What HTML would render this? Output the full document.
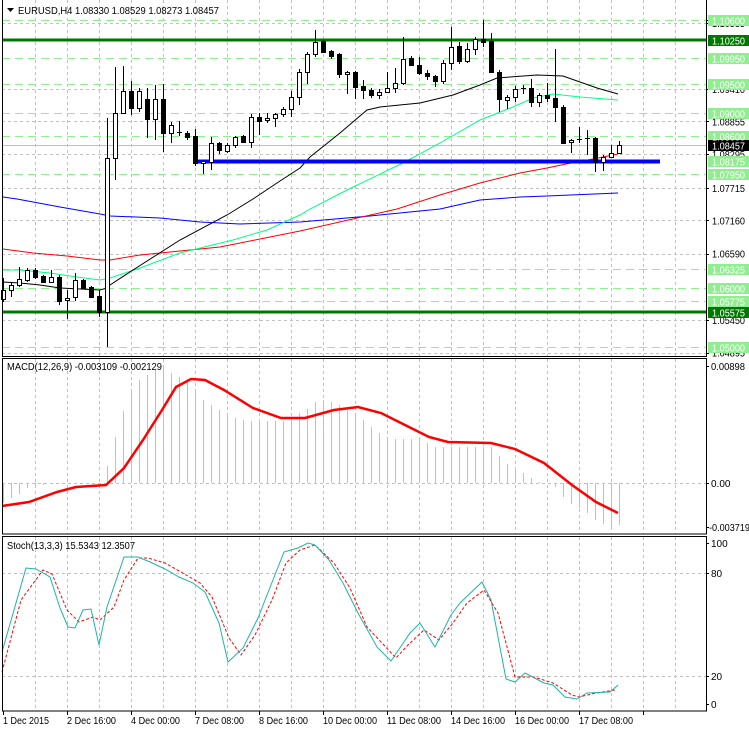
<!DOCTYPE html>
<html><head><meta charset="utf-8"><style>
html,body{margin:0;padding:0;background:#fff;}
svg{display:block;font-family:"Liberation Sans",sans-serif;}
</style></head><body>
<svg width="749" height="732" viewBox="0 0 749 732" xmlns="http://www.w3.org/2000/svg">
<rect width="749" height="732" fill="#fff"/>
<!-- vertical grid -->
<g stroke="#c0c0c0" stroke-width="1" stroke-dasharray="3,3">
<path d="M35.5 0V356M67.5 0V356M99.5 0V356M131.5 0V356M163.5 0V356M195.5 0V356M227.5 0V356M259.5 0V356M291.5 0V356M323.5 0V356M355.5 0V356M387.5 0V356M419.5 0V356M451.5 0V356M483.5 0V356M515.5 0V356M547.5 0V356M579.5 0V356M611.5 0V356M643.5 0V356M675.5 0V356"/>
<path d="M35.5 359V534M67.5 359V534M99.5 359V534M131.5 359V534M163.5 359V534M195.5 359V534M227.5 359V534M259.5 359V534M291.5 359V534M323.5 359V534M355.5 359V534M387.5 359V534M419.5 359V534M451.5 359V534M483.5 359V534M515.5 359V534M547.5 359V534M579.5 359V534M611.5 359V534M643.5 359V534M675.5 359V534"/>
<path d="M35.5 537V711M67.5 537V711M99.5 537V711M131.5 537V711M163.5 537V711M195.5 537V711M227.5 537V711M259.5 537V711M291.5 537V711M323.5 537V711M355.5 537V711M387.5 537V711M419.5 537V711M451.5 537V711M483.5 537V711M515.5 537V711M547.5 537V711M579.5 537V711M611.5 537V711M643.5 537V711M675.5 537V711"/>
<!-- horizontal grid main -->
<path d="M2 23.5H706M2 89.5H706M2 121.5H706M2 154.5H706M2 188.5H706M2 220.5H706M2 254.5H706M2 320.5H706M2 353.5H706"/>
<path d="M2 483.5H706M2 573.5H706M2 676.5H706"/>
</g>
<!-- light green levels -->
<g stroke="#90ee90" stroke-width="1" stroke-dasharray="8,5">
<path d="M2 20.5H706M2 58.5H706M2 84.5H706M2 113.5H706M2 136.5H706M2 174.5H706M2 269.5H706M2 288.5H706M2 301.5H706M2 347.5H706"/>
</g>
<!-- bid line -->
<path d="M2 145.5H706" stroke="#c0c0c0" stroke-width="1"/>
<!-- dark green levels -->
<path d="M2 40H706M2 312H706" stroke="#007800" stroke-width="3"/>
<!-- MAs -->
<g fill="none" stroke-width="1">
<polyline stroke="#0000ff" points="3,197 17,199 60,207 100,214 110,216 160,218 200,222 240,224 300,222 370,216 440,209 480,200 520,197 547,196 618,193"/>
<polyline stroke="#ff0000" points="3,249 33,253 67,256 100,260 110,260 140,255 180,251 220,247 260,239 300,231 397,209 440,195 480,183 520,173 547,168 571,163 593,159 618,154"/>
<polyline stroke="#00ff7f" points="3,270 20,270 50,273 77,277 100,280 110,278 140,268 180,253 233,240 267,230 300,215 310,209 347,190 403,163 440,143 480,120 513,107 533,98 553,94 580,97 618,100"/>
<polyline stroke="#000" points="3,282 20,283 40,285 60,288 80,289 100,290 107,288 110,285 133,270 180,240 227,215 253,199 280,181 300,168 310,157 340,133 367,110 380,107 420,103 453,95 480,85 497,78 537,75 563,76 580,82 597,88 618,94"/>
</g>
<!-- blue level -->
<path d="M195 161.5H660" stroke="#0000ff" stroke-width="4"/>
<!-- candles -->
<g stroke="#000" stroke-width="1">
<path d="M3.5 278V302M11.5 283V297M19.5 267V287M27.5 268V282M35.5 268V279M43.5 275V283M51.5 270V283M59.5 275V305M67.5 290V319M75.5 273V301M83.5 279V289M91.5 286V298M99.5 290V317M107.5 118V347M115.5 67V180M123.5 66V113M131.5 81V115M139.5 88V112M147.5 88V138M155.5 85V140M163.5 84V152M171.5 122V143M179.5 121V136M187.5 131V140M195.5 129V166M203.5 160V174M211.5 137V170M219.5 142V154M227.5 143V153M235.5 136V148M243.5 135V143M251.5 114V148M259.5 113V135M267.5 113V123M275.5 113V127M283.5 107V117M291.5 91V117M299.5 69V105M307.5 52V84M315.5 30V57M323.5 40V53M331.5 50V59M339.5 53V78M347.5 71V94M355.5 71V99M363.5 80V99M371.5 88V98M379.5 89V99M387.5 72V93M395.5 68V93M403.5 37V85M411.5 56V66M419.5 57V75M427.5 70V80M435.5 75V87M443.5 60V84M451.5 27V70M459.5 42V64M467.5 43V63M475.5 37V55M483.5 20V47M491.5 33V73M499.5 70V112M507.5 95V109M515.5 86V102M523.5 85V94M531.5 79V107M539.5 93V107M547.5 83V102M555.5 49V122M563.5 105V143M571.5 139V153M579.5 127V143M587.5 130V155M595.5 137V172M603.5 155V171M611.5 145V158M619.5 141V154"/>
</g>
<g stroke="#000" stroke-width="1">
<!-- bull W -->
<g fill="#fff">
<rect x="1.5" y="290.5" width="4" height="9"/><rect x="9.5" y="285.5" width="4" height="5"/><rect x="17.5" y="279.5" width="4" height="6"/><rect x="25.5" y="270.5" width="4" height="10"/><rect x="49.5" y="277.5" width="4" height="5"/><rect x="65.5" y="298.5" width="4" height="2"/><rect x="73.5" y="280.5" width="4" height="17"/><rect x="105.5" y="158.5" width="4" height="154"/><rect x="113.5" y="113.5" width="4" height="45"/><rect x="121.5" y="91.5" width="4" height="22"/><rect x="137.5" y="91.5" width="4" height="17"/><rect x="153.5" y="99.5" width="4" height="20"/><rect x="169.5" y="125.5" width="4" height="8"/><rect x="201.5" y="161.5" width="4" height="2"/><rect x="209.5" y="143.5" width="4" height="19"/><rect x="225.5" y="145.5" width="4" height="6"/><rect x="233.5" y="137.5" width="4" height="8"/><rect x="249.5" y="117.5" width="4" height="25"/><rect x="265.5" y="118.5" width="4" height="2"/><rect x="273.5" y="114.5" width="4" height="4"/><rect x="281.5" y="109.5" width="4" height="5"/><rect x="289.5" y="97.5" width="4" height="12"/><rect x="297.5" y="72.5" width="4" height="25"/><rect x="305.5" y="54.5" width="4" height="18"/><rect x="313.5" y="42.5" width="4" height="12"/><rect x="345.5" y="72.5" width="4" height="2"/><rect x="377.5" y="92.5" width="4" height="3"/><rect x="385.5" y="88.5" width="4" height="4"/><rect x="393.5" y="83.5" width="4" height="5"/><rect x="401.5" y="59.5" width="4" height="24"/><rect x="441.5" y="63.5" width="4" height="18"/><rect x="449.5" y="47.5" width="4" height="16"/><rect x="465.5" y="49.5" width="4" height="12"/><rect x="473.5" y="39.5" width="4" height="10"/><rect x="505.5" y="97.5" width="4" height="3"/><rect x="513.5" y="89.5" width="4" height="8"/><rect x="537.5" y="95.5" width="4" height="7"/><rect x="569.5" y="140.5" width="4" height="2"/><rect x="601.5" y="157.5" width="4" height="5"/><rect x="609.5" y="153.5" width="4" height="4"/><rect x="617.5" y="145.5" width="4" height="8"/>
</g>
<g fill="#000">
<rect x="33.5" y="270.5" width="4" height="7"/><rect x="41.5" y="276.5" width="4" height="6"/><rect x="57.5" y="277.5" width="4" height="24"/><rect x="81.5" y="280.5" width="4" height="8"/><rect x="89.5" y="287.5" width="4" height="10"/><rect x="97.5" y="296.5" width="4" height="16"/><rect x="129.5" y="91.5" width="4" height="17"/><rect x="145.5" y="99.5" width="4" height="20"/><rect x="161.5" y="99.5" width="4" height="34"/><rect x="185.5" y="133.5" width="4" height="4"/><rect x="193.5" y="136.5" width="4" height="27"/><rect x="217.5" y="143.5" width="4" height="7"/><rect x="241.5" y="136.5" width="4" height="6"/><rect x="257.5" y="117.5" width="4" height="4"/><rect x="321.5" y="41.5" width="4" height="11"/><rect x="329.5" y="51.5" width="4" height="5"/><rect x="337.5" y="54.5" width="4" height="20"/><rect x="353.5" y="72.5" width="4" height="15"/><rect x="361.5" y="86.5" width="4" height="4"/><rect x="369.5" y="90.5" width="4" height="5"/><rect x="409.5" y="58.5" width="4" height="7"/><rect x="417.5" y="65.5" width="4" height="8"/><rect x="425.5" y="73.5" width="4" height="3"/><rect x="433.5" y="76.5" width="4" height="5"/><rect x="457.5" y="46.5" width="4" height="15"/><rect x="481.5" y="39.5" width="4" height="3"/><rect x="489.5" y="41.5" width="4" height="31"/><rect x="497.5" y="72.5" width="4" height="27"/><rect x="529.5" y="88.5" width="4" height="14"/><rect x="545.5" y="95.5" width="4" height="3"/><rect x="553.5" y="98.5" width="4" height="9"/><rect x="561.5" y="107.5" width="4" height="36"/><rect x="593.5" y="138.5" width="4" height="24"/>
</g>
<path d="M177 132.5H182M521 88.5H526M577 139.5H582M585 138.5H590"/>
</g>
<!-- MACD histogram -->
<path stroke="#c0c0c0" stroke-width="1" fill="none" d="M3.5 483V503M11.5 483V498M19.5 483V494M27.5 483V488M35.5 483V486M43.5 483V485M107.5 483V466M115.5 483V437M123.5 483V411M131.5 483V392M139.5 483V380M147.5 483V375M155.5 483V370M163.5 483V368M171.5 483V373M179.5 483V377M187.5 483V382M195.5 483V390M203.5 483V400M211.5 483V405M219.5 483V410M227.5 483V415M235.5 483V418M243.5 483V420M251.5 483V421M259.5 483V421M267.5 483V421M275.5 483V421M283.5 483V421M291.5 483V417M299.5 483V413M307.5 483V409M315.5 483V402M323.5 483V400M331.5 483V402M339.5 483V405M347.5 483V410M355.5 483V415M363.5 483V420M371.5 483V427M379.5 483V433M387.5 483V437M395.5 483V439M403.5 483V439M411.5 483V439M419.5 483V439M427.5 483V443M435.5 483V447M443.5 483V447M451.5 483V447M459.5 483V447M467.5 483V447M475.5 483V447M483.5 483V447M491.5 483V447M499.5 483V456M507.5 483V464M515.5 483V468M523.5 483V473M531.5 483V478M539.5 483V482M555.5 483V487M563.5 483V497M571.5 483V504M579.5 483V508M587.5 483V513M595.5 483V520M603.5 483V524M611.5 483V527M619.5 483V525"/>
<polyline fill="none" stroke="#ff0000" stroke-width="2.5" points="2,506 29,502 57,492 76,487 106,485 124,468 143,440 162,410 176,387 191,379 205,380 224,390 253,408 281,418 305,418 334,410 358,407 381,413 405,425 429,437 448,442 491,443 515,449 544,463 572,485 596,502 618,513"/>
<!-- Stoch -->
<polyline fill="none" stroke="#ff0000" stroke-width="1" stroke-dasharray="3,2" points="2,672 21,600 43,570 52,574 67,610 79,622 93,617 100,620 114,607 124,580 138,558 148,558 165,563 181,572 200,583 212,597 229,638 241,655 255,635 272,600 286,563 300,550 315,545 334,563 350,588 367,627 396,658 408,645 424,630 439,640 453,623 467,603 484,590 498,613 515,677 534,677 553,683 572,695 579,697 596,693 615,690"/>
<polyline fill="none" stroke="#20b2aa" stroke-width="1" points="2,652 26,568 36,569 50,577 60,608 68,627 75,628 83,610 91,609 99,645 107,607 124,557 138,557 150,562 165,569 179,577 193,583 205,592 219,623 228,662 243,648 258,618 269,590 284,552 298,548 308,543 315,545 329,560 343,583 358,613 377,647 391,661 410,633 420,623 435,647 451,615 460,603 482,582 491,600 506,679 515,682 525,673 544,683 553,685 565,697 577,699 587,693 610,692 618,685"/>
<!-- frames -->
<g fill="none" stroke="#000" stroke-width="1">
<rect x="2.5" y="-1" width="704" height="357.5"/>
<rect x="2.5" y="358.5" width="704" height="175.5"/>
<rect x="2.5" y="536.5" width="704" height="174.5"/>
<path d="M706 20.5h3M706 23.5h3M706 89.5h3M706 121.5h3M706 154.5h3M706 188.5h3M706 220.5h3M706 254.5h3M706 320.5h3M706 353.5h3M706 366.5h3M706 483.5h3M706 527.5h3M706 543.5h3M706 573.5h3M706 676.5h3M706 704.5h3M3.5 711v4M67.5 711v4M131.5 711v4M195.5 711v4M259.5 711v4M323.5 711v4M387.5 711v4M451.5 711v4M515.5 711v4M579.5 711v4M643.5 711v4"/>
</g>
<!-- axis labels -->
<g font-size="10" fill="#000">
<text x="712" y="93" textLength="33" lengthAdjust="spacingAndGlyphs">1.09410</text>
<text x="712" y="125.5" textLength="33" lengthAdjust="spacingAndGlyphs">1.08855</text>
<text x="712" y="158" textLength="33" lengthAdjust="spacingAndGlyphs">1.08295</text>
<text x="712" y="192" textLength="33" lengthAdjust="spacingAndGlyphs">1.07715</text>
<text x="712" y="224.5" textLength="33" lengthAdjust="spacingAndGlyphs">1.07160</text>
<text x="712" y="257.5" textLength="33" lengthAdjust="spacingAndGlyphs">1.06590</text>
<text x="712" y="324" textLength="33" lengthAdjust="spacingAndGlyphs">1.05450</text>
<text x="712" y="356.5" textLength="33" lengthAdjust="spacingAndGlyphs">1.04895</text>
<text x="712" y="27" textLength="33" lengthAdjust="spacingAndGlyphs">1.10535</text>
</g>
<g fill="#90ee90">
<rect x="708" y="15" width="41" height="11"/><rect x="708" y="53" width="41" height="11"/><rect x="708" y="79" width="41" height="11"/><rect x="708" y="108" width="41" height="11"/><rect x="708" y="131" width="41" height="11"/><rect x="708" y="156" width="41" height="11"/><rect x="708" y="169" width="41" height="11"/><rect x="708" y="264" width="41" height="11"/><rect x="708" y="283" width="41" height="11"/><rect x="708" y="296" width="41" height="11"/><rect x="708" y="342" width="41" height="11"/>
</g>
<rect x="708" y="35" width="41" height="11" fill="#007800"/>
<rect x="708" y="307" width="41" height="11" fill="#007800"/>
<rect x="708" y="140" width="41" height="11" fill="#000"/>
<g font-size="10" fill="#fff">
<text x="712" y="24.5" textLength="33" lengthAdjust="spacingAndGlyphs">1.10600</text>
<text x="712" y="44.5" textLength="33" lengthAdjust="spacingAndGlyphs">1.10250</text>
<text x="712" y="62.5" textLength="33" lengthAdjust="spacingAndGlyphs">1.09950</text>
<text x="712" y="88.5" textLength="33" lengthAdjust="spacingAndGlyphs">1.09500</text>
<text x="712" y="117.5" textLength="33" lengthAdjust="spacingAndGlyphs">1.09000</text>
<text x="712" y="140.5" textLength="33" lengthAdjust="spacingAndGlyphs">1.08600</text>
<text x="712" y="149.5" textLength="33" lengthAdjust="spacingAndGlyphs">1.08457</text>
<text x="712" y="165.5" textLength="33" lengthAdjust="spacingAndGlyphs">1.08175</text>
<text x="712" y="178.5" textLength="33" lengthAdjust="spacingAndGlyphs">1.07950</text>
<text x="712" y="273.5" textLength="33" lengthAdjust="spacingAndGlyphs">1.06325</text>
<text x="712" y="292.5" textLength="33" lengthAdjust="spacingAndGlyphs">1.06000</text>
<text x="712" y="305.5" textLength="33" lengthAdjust="spacingAndGlyphs">1.05775</text>
<text x="712" y="316.5" textLength="33" lengthAdjust="spacingAndGlyphs">1.05575</text>
<text x="712" y="351.5" textLength="33" lengthAdjust="spacingAndGlyphs">1.05000</text>
</g>
<g font-size="10" fill="#000">
<text x="711" y="370" textLength="34" lengthAdjust="spacingAndGlyphs">0.00898</text>
<text x="711" y="487">0.00</text>
<text x="709" y="531" textLength="41" lengthAdjust="spacingAndGlyphs">-0.003719</text>
<text x="711" y="547">100</text>
<text x="711" y="577">80</text>
<text x="711" y="680">20</text>
<text x="711" y="708">0</text>
<text x="7" y="370" textLength="155" lengthAdjust="spacingAndGlyphs">MACD(12,26,9) -0.003109 -0.002129</text>
<text x="7" y="549" textLength="128" lengthAdjust="spacingAndGlyphs">Stoch(13,3,3) 15.5343 12.3507</text>
<text x="18" y="14" textLength="201" lengthAdjust="spacingAndGlyphs">EURUSD,H4  1.08330 1.08529 1.08273 1.08457</text>
</g>
<path d="M7 8h7l-3.5 4z" fill="#000"/>
<g font-size="10" fill="#000">
<text x="3" y="724" textLength="46" lengthAdjust="spacingAndGlyphs">1 Dec 2015</text>
<text x="67" y="724" textLength="49" lengthAdjust="spacingAndGlyphs">2 Dec 16:00</text>
<text x="131" y="724" textLength="49" lengthAdjust="spacingAndGlyphs">4 Dec 00:00</text>
<text x="195" y="724" textLength="49" lengthAdjust="spacingAndGlyphs">7 Dec 08:00</text>
<text x="259" y="724" textLength="49" lengthAdjust="spacingAndGlyphs">8 Dec 16:00</text>
<text x="323" y="724" textLength="54" lengthAdjust="spacingAndGlyphs">10 Dec 00:00</text>
<text x="387" y="724" textLength="54" lengthAdjust="spacingAndGlyphs">11 Dec 08:00</text>
<text x="451" y="724" textLength="54" lengthAdjust="spacingAndGlyphs">14 Dec 16:00</text>
<text x="515" y="724" textLength="54" lengthAdjust="spacingAndGlyphs">16 Dec 00:00</text>
<text x="579" y="724" textLength="54" lengthAdjust="spacingAndGlyphs">17 Dec 08:00</text>
</g>
</svg>
</body></html>
